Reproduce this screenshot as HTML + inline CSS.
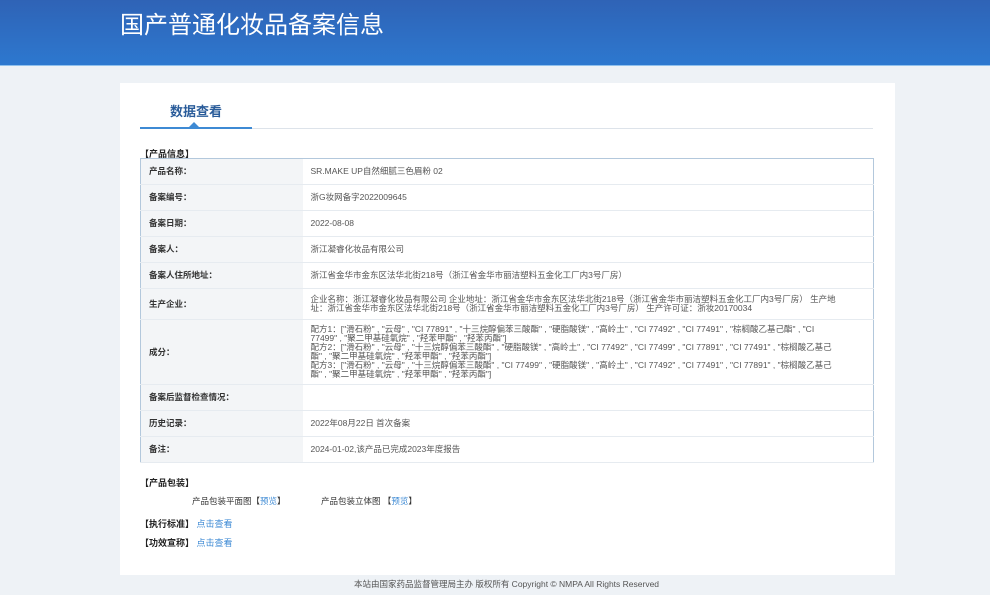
<!DOCTYPE html>
<html><head><meta charset="utf-8">
<style>
*{margin:0;padding:0;box-sizing:border-box}
body{width:990px;height:595px;background:#eef2f6;font-family:"Liberation Sans","Noto Sans CJK SC",sans-serif;position:relative;overflow:hidden;color:#333}
.hd{position:absolute;left:0;top:0;width:990px;height:66px;background:linear-gradient(180deg,#2f63b6 0%,#2d78cf 100%);border-bottom:1px solid #8fc0ec}
.hd h1{position:absolute;left:120px;top:5px;font-size:24px;font-weight:normal;color:#fff}
.card{position:absolute;left:120px;top:83px;width:775px;height:492px;background:#fff}
.tab{position:absolute;left:50px;top:18px;font-size:13px;font-weight:bold;color:#2a5c9a}
.line{position:absolute;left:20px;top:45px;width:733px;height:1px;background:#dde3ea}
.line2{position:absolute;left:20px;top:44px;width:112px;height:2px;background:#3e8ad4}
.tri{position:absolute;left:69px;top:39px;width:0;height:0;border-left:5px solid transparent;border-right:5px solid transparent;border-bottom:5px solid #3e8ad4}
.sec{position:absolute;left:20px;font-size:9px;font-weight:bold;color:#222}
table{position:absolute;left:20px;top:75px;width:734px;border-collapse:collapse;border:1px solid #b3c8dc;font-size:8.5px}
td{border-bottom:1px solid #e6ebf0;padding:0 8px;line-height:9px;vertical-align:middle}
td.l{width:162px;background:#f3f5f7;font-weight:bold;color:#333;padding-left:8px}
td.v{color:#555;padding-right:30px}
.sm{position:absolute;font-size:8.5px;color:#333}
.lk{color:#3d8ad4}
.ft{position:absolute;left:0;top:578px;width:1013px;text-align:center;font-size:8.5px;color:#555}
</style></head><body>
<div class="hd"><h1>国产普通化妆品备案信息</h1></div>
<div class="card">
<div class="tab">数据查看</div>
<div class="line"></div><div class="line2"></div><div class="tri"></div>
<div class="sec" style="top:64px">【产品信息】</div>
<table>
<tr style="height:26px"><td class="l">产品名称：</td><td class="v">SR.MAKE UP自然细腻三色眉粉 02</td></tr>
<tr style="height:26px"><td class="l">备案编号：</td><td class="v">浙G妆网备字2022009645</td></tr>
<tr style="height:26px"><td class="l">备案日期：</td><td class="v">2022-08-08</td></tr>
<tr style="height:26px"><td class="l">备案人：</td><td class="v">浙江凝睿化妆品有限公司</td></tr>
<tr style="height:26px"><td class="l">备案人住所地址：</td><td class="v">浙江省金华市金东区法华北街218号（浙江省金华市丽洁塑料五金化工厂内3号厂房）</td></tr>
<tr style="height:31px"><td class="l">生产企业：</td><td class="v">企业名称：浙江凝睿化妆品有限公司 企业地址：浙江省金华市金东区法华北街218号（浙江省金华市丽洁塑料五金化工厂内3号厂房） 生产地址：浙江省金华市金东区法华北街218号（浙江省金华市丽洁塑料五金化工厂内3号厂房） 生产许可证：浙妆20170034</td></tr>
<tr style="height:65px"><td class="l">成分：</td><td class="v">配方1：["滑石粉" , "云母" , "CI 77891" , "十三烷醇偏苯三酸酯" , "硬脂酸镁" , "高岭土" , "CI 77492" , "CI 77491" , "棕榈酸乙基己酯" , "CI 77499" , "聚二甲基硅氧烷" , "羟苯甲酯" , "羟苯丙酯"]<br>配方2：["滑石粉" , "云母" , "十三烷醇偏苯三酸酯" , "硬脂酸镁" , "高岭土" , "CI 77492" , "CI 77499" , "CI 77891" , "CI 77491" , "棕榈酸乙基己酯" , "聚二甲基硅氧烷" , "羟苯甲酯" , "羟苯丙酯"]<br>配方3：["滑石粉" , "云母" , "十三烷醇偏苯三酸酯" , "CI 77499" , "硬脂酸镁" , "高岭土" , "CI 77492" , "CI 77491" , "CI 77891" , "棕榈酸乙基己酯" , "聚二甲基硅氧烷" , "羟苯甲酯" , "羟苯丙酯"]</td></tr>
<tr style="height:26px"><td class="l">备案后监督检查情况：</td><td class="v"></td></tr>
<tr style="height:26px"><td class="l">历史记录：</td><td class="v">2022年08月22日 首次备案</td></tr>
<tr style="height:26px"><td class="l">备注：</td><td class="v">2024-01-02,该产品已完成2023年度报告</td></tr>
</table>
<div class="sec" style="top:393px">【产品包装】</div>
<div class="sm" style="left:72px;top:412px">产品包装平面图【<span class="lk">预览</span>】</div>
<div class="sm" style="left:201px;top:412px">产品包装立体图 【<span class="lk">预览</span>】</div>
<div class="sec" style="top:434px">【执行标准】 <span class="lk" style="font-weight:normal">点击查看</span></div>
<div class="sec" style="top:453px">【功效宣称】 <span class="lk" style="font-weight:normal">点击查看</span></div>
</div>
<div class="ft">本站由国家药品监督管理局主办 版权所有 Copyright © NMPA All Rights Reserved</div>
</body></html>
